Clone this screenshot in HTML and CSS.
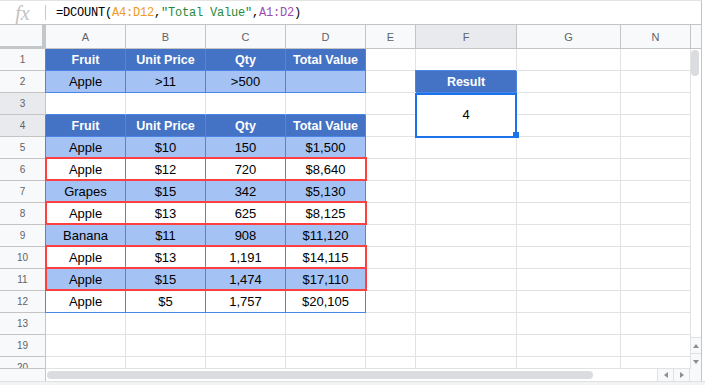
FILE: index.html
```html
<!DOCTYPE html>
<html lang="en">
<head>
  <meta charset="UTF-8">
  <title>DCOUNT</title>
  <link rel="stylesheet" href="styles.css">
</head>
<body>
  <div class="formula">
    <span class="fx">fx</span>
    <span class="sep"></span>
    <span class="expr">=DCOUNT(<span class="ref1">A4:D12</span>,<span class="str">"Total Value"</span>,<span class="ref2">A1:D2</span>)</span>
  </div>

  <div class="sheet">
    <!-- column headers -->
    <div class="corner"></div>
    <div class="col">A</div>
    <div class="col">B</div>
    <div class="col">C</div>
    <div class="col">D</div>
    <div class="col">E</div>
    <div class="col on">F</div>
    <div class="col">G</div>
    <div class="col">N</div>
    <div class="col"></div>

    <div class="vscroll">
      <div class="vthumb"></div>
      <div class="vbtns">
        <div class="btn"><span class="tri up"></span></div>
        <div class="btn"><span class="tri down"></span></div>
      </div>
    </div>

    <!-- row 1 -->
    <div class="rh">1</div>
    <div class="c h first">Fruit</div>
    <div class="c h">Unit Price</div>
    <div class="c h">Qty</div>
    <div class="c h">Total Value</div>
    <div class="c"></div><div class="c"></div><div class="c"></div><div class="c"></div>

    <!-- row 2 -->
    <div class="rh">2</div>
    <div class="c b first">Apple</div>
    <div class="c b">&gt;11</div>
    <div class="c b">&gt;500</div>
    <div class="c b"></div>
    <div class="c"></div>
    <div class="c h res">Result</div>
    <div class="c"></div><div class="c"></div>

    <!-- row 3 -->
    <div class="rh on">3</div>
    <div class="c bb"></div><div class="c bb"></div><div class="c bb"></div><div class="c bb"></div>
    <div class="c"></div>
    <div class="c val">4</div>
    <div class="c"></div><div class="c"></div>

    <!-- row 4 -->
    <div class="rh on">4</div>
    <div class="c h first">Fruit</div>
    <div class="c h">Unit Price</div>
    <div class="c h">Qty</div>
    <div class="c h">Total Value</div>
    <div class="c"></div><div class="c"></div><div class="c"></div>

    <!-- row 5 -->
    <div class="rh">5</div>
    <div class="c b first">Apple</div>
    <div class="c b">$10</div>
    <div class="c b">150</div>
    <div class="c b">$1,500</div>
    <div class="c"></div><div class="c"></div><div class="c"></div><div class="c"></div>

    <!-- row 6 -->
    <div class="rh">6</div>
    <div class="c w first">Apple</div>
    <div class="c w">$12</div>
    <div class="c w">720</div>
    <div class="c w">$8,640</div>
    <div class="c"></div><div class="c"></div><div class="c"></div><div class="c"></div>

    <!-- row 7 -->
    <div class="rh">7</div>
    <div class="c b first">Grapes</div>
    <div class="c b">$15</div>
    <div class="c b">342</div>
    <div class="c b">$5,130</div>
    <div class="c"></div><div class="c"></div><div class="c"></div><div class="c"></div>

    <!-- row 8 -->
    <div class="rh">8</div>
    <div class="c w first">Apple</div>
    <div class="c w">$13</div>
    <div class="c w">625</div>
    <div class="c w">$8,125</div>
    <div class="c"></div><div class="c"></div><div class="c"></div><div class="c"></div>

    <!-- row 9 -->
    <div class="rh">9</div>
    <div class="c b first">Banana</div>
    <div class="c b">$11</div>
    <div class="c b">908</div>
    <div class="c b">$11,120</div>
    <div class="c"></div><div class="c"></div><div class="c"></div><div class="c"></div>

    <!-- row 10 -->
    <div class="rh">10</div>
    <div class="c w first">Apple</div>
    <div class="c w">$13</div>
    <div class="c w">1,191</div>
    <div class="c w">$14,115</div>
    <div class="c"></div><div class="c"></div><div class="c"></div><div class="c"></div>

    <!-- row 11 -->
    <div class="rh">11</div>
    <div class="c b first">Apple</div>
    <div class="c b">$15</div>
    <div class="c b">1,474</div>
    <div class="c b">$17,110</div>
    <div class="c"></div><div class="c"></div><div class="c"></div><div class="c"></div>

    <!-- row 12 -->
    <div class="rh">12</div>
    <div class="c w first">Apple</div>
    <div class="c w">$5</div>
    <div class="c w">1,757</div>
    <div class="c w">$20,105</div>
    <div class="c"></div><div class="c"></div><div class="c"></div><div class="c"></div>

    <!-- row 13 -->
    <div class="rh">13</div>
    <div class="c"></div><div class="c"></div><div class="c"></div><div class="c"></div>
    <div class="c"></div><div class="c"></div><div class="c"></div><div class="c"></div>

    <!-- row 19 -->
    <div class="rh">19</div>
    <div class="c"></div><div class="c"></div><div class="c"></div><div class="c"></div>
    <div class="c"></div><div class="c"></div><div class="c"></div><div class="c"></div>

    <!-- row 20, cut off -->
    <div class="rh cut">20</div>
    <div class="c"></div><div class="c"></div><div class="c"></div><div class="c"></div>
    <div class="c"></div><div class="c"></div><div class="c"></div><div class="c"></div>

    <!-- highlighted matches -->
    <div class="mark r6"></div>
    <div class="mark r8"></div>
    <div class="mark r10"></div>
    <div class="mark r11"></div>

    <!-- selection -->
    <div class="sel"></div>
    <div class="handle"></div>
  </div>

  <div class="hscroll">
    <div class="hs-left"></div>
    <div class="track"><div class="hthumb"></div></div>
    <div class="hbtn"><span class="tri left"></span></div>
    <div class="hbtn"><span class="tri right"></span></div>
    <div class="hs-corner"></div>
  </div>
  <div class="tabs"></div>
</body>
</html>
```

FILE: styles.css
```css
body {
  margin: 0;
  width: 705px;
  height: 385px;
  overflow: hidden;
  background: #fff;
  font-family: "Liberation Sans", Arial, sans-serif;
}
.formula {
  display: flex;
  align-items: center;
  width: 702px;
  height: 25px;
  box-sizing: border-box;
  border-top: 1px solid #e3e3e3;
  border-bottom: 1px solid #c4c4c4;
  border-right: 1px solid #c4c4c4;
}
.fx {
  width: 45px;
  text-align: center;
  font-family: "Liberation Serif", serif;
  font-style: italic;
  font-size: 20px;
  color: #c2c2c2;
  line-height: 20px;
}
.sep {
  width: 1px;
  height: 15px;
  background: #c8c8c8;
}
.expr {
  margin-left: 10px;
  font-family: "Liberation Mono", "DejaVu Sans Mono", monospace;
  font-size: 12px;
  letter-spacing: -0.2px;
  color: #000;
}
.ref1 { color: #f09a24; }
.str { color: #1f8a3a; }
.ref2 { color: #9b4fb4; }

.sheet {
  position: relative;
  display: grid;
  grid-template-columns: 46px 80px 80px 80px 80px 50px 101px 104px 70px 11px;
  grid-template-rows: 24px repeat(14, 22px) 12px;
  width: 702px;
}
.corner {
  background: #f8f9fa;
  border-right: 4px solid #c4c7c9;
  border-bottom: 3px solid #c4c7c9;
}
.col {
  display: flex;
  align-items: center;
  justify-content: center;
  background: #f8f9fa;
  border-right: 1px solid #c4c4c4;
  border-bottom: 1px solid #c4c4c4;
  font-family: Arial, "Liberation Sans", sans-serif;
  font-size: 11px;
  color: #5f6368;
}
.col.on, .rh.on {
  background: #e8eaed;
}
.rh {
  display: flex;
  align-items: center;
  justify-content: center;
  background: #f8f9fa;
  border-right: 1px solid #c4c4c4;
  border-bottom: 1px solid #c4c4c4;
  font-size: 10px;
  color: #5f6368;
  overflow: hidden;
}
.rh.cut {
  align-items: flex-start;
  padding-top: 5px;
  box-sizing: border-box;
}
.c {
  display: flex;
  align-items: center;
  justify-content: center;
  border-right: 1px solid #e2e2e2;
  border-bottom: 1px solid #e2e2e2;
  font-size: 13px;
  color: #000;
  white-space: nowrap;
  overflow: hidden;
}
.h {
  background: #4472c4;
  border-color: #4a86e8;
  color: #fff;
  font-weight: bold;
  font-size: 12.5px;
}
.b {
  background: #a4c2f4;
  border-color: #4a86e8;
}
.w {
  border-color: #4a86e8;
}
.bb {
  border-bottom-color: #4a86e8;
}
.first {
  box-shadow: -1px 0 0 #4a86e8;
}
.res {
  box-shadow: -1px -1px 0 #4a86e8;
}
.val {
  grid-row: span 2;
}

.vscroll {
  grid-column: 10;
  grid-row: 2 / -1;
  display: flex;
  flex-direction: column;
  justify-content: space-between;
  border-right: 1px solid #c4c4c4;
  background: #fff;
}
.vthumb {
  width: 8px;
  height: 26px;
  margin: 1px 0 0 0;
  border-radius: 4px;
  background: #dadce0;
}
.btn {
  height: 16px;
  box-sizing: border-box;
  border-top: 1px solid #e0e0e0;
  background: #f8f9fa;
  display: flex;
  align-items: center;
  justify-content: center;
}
.tri {
  width: 0;
  height: 0;
}
.tri.up {
  border-left: 3px solid transparent;
  border-right: 3px solid transparent;
  border-bottom: 4px solid #8a8f94;
}
.tri.down {
  border-left: 3px solid transparent;
  border-right: 3px solid transparent;
  border-top: 4px solid #8a8f94;
}
.tri.left {
  border-top: 3px solid transparent;
  border-bottom: 3px solid transparent;
  border-right: 4px solid #8a8f94;
}
.tri.right {
  border-top: 3px solid transparent;
  border-bottom: 3px solid transparent;
  border-left: 4px solid #8a8f94;
}

.mark {
  position: absolute;
  left: 45px;
  width: 322px;
  height: 24px;
  box-sizing: border-box;
  border: 2px solid #ff4040;
}
.r6 { top: 132px; }
.r8 { top: 176px; }
.r10 { top: 220px; }
.r11 { top: 242px; }

.sel {
  position: absolute;
  left: 415px;
  top: 68px;
  width: 102px;
  height: 45px;
  box-sizing: border-box;
  border: 2px solid #1a73e8;
}
.handle {
  position: absolute;
  left: 513px;
  top: 107px;
  width: 6px;
  height: 6px;
  background: #1a73e8;
}

.hscroll {
  display: flex;
  width: 702px;
  height: 12px;
}
.hs-left {
  width: 46px;
  box-sizing: border-box;
  background: #f8f9fa;
  border-right: 1px solid #c4c4c4;
}
.track {
  width: 611px;
}
.hthumb {
  width: 546px;
  height: 8px;
  margin: 2px 0 0 1px;
  border-radius: 4px;
  background: #dadce0;
}
.hbtn {
  width: 16px;
  box-sizing: border-box;
  border-left: 1px solid #e0e0e0;
  background: #f8f9fa;
  display: flex;
  align-items: center;
  justify-content: center;
}
.hs-corner {
  width: 13px;
  box-sizing: border-box;
  border-left: 1px solid #e0e0e0;
  border-right: 1px solid #c4c4c4;
  background: #f8f9fa;
}
.tabs {
  height: 4px;
  box-sizing: border-box;
  border-top: 1px solid #e0e0e0;
  background: #f1f3f4;
}
```
